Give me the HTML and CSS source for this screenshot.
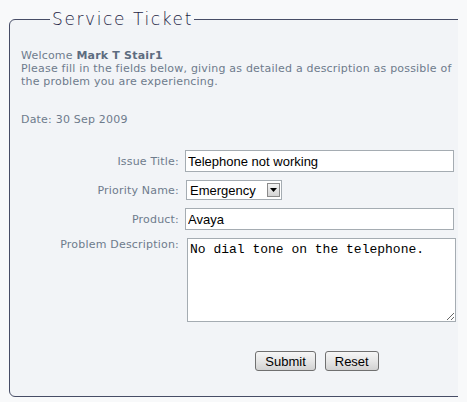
FILE: index.html
```html
<!DOCTYPE html>
<html>
  <head>
    <title>Service Ticket</title>
    <link rel="stylesheet" href="styles.css">
  </head>
  <body>
    <form class="ticket-form">
      <fieldset class="ticket-box">
        <legend class="ticket-legend">Service Ticket</legend>

        <div class="intro">
          <p>Welcome <b class="user-name">Mark T Stair1</b><br>
          Please fill in the fields below, giving as detailed a description as possible of the problem you are experiencing.</p>
          <p class="date-line">Date: 30 Sep 2009</p>
        </div>

        <div class="field-grid">
          <label class="field-label" for="issue-title">Issue Title:</label>
          <input id="issue-title" class="text-input" value="Telephone not working">

          <label class="field-label" for="priority">Priority Name:</label>
          <span class="select-wrap">
            <select id="priority" class="select-input">
              <option>Emergency</option>
              <option>High</option>
              <option>Normal</option>
              <option>Low</option>
            </select>
            <span class="select-arrow">
              <svg width="7" height="4" viewBox="0 0 7 4"><path d="M0 0H7L3.5 4Z" fill="#000"/></svg>
            </span>
          </span>

          <label class="field-label" for="product">Product:</label>
          <input id="product" class="text-input" value="Avaya">

          <label class="field-label label-top" for="description">Problem Description:</label>
          <textarea id="description" class="text-area">No dial tone on the telephone.</textarea>

          <span></span>
          <div class="button-row">
            <button type="submit" class="form-button">Submit</button>
            <button type="reset" class="form-button">Reset</button>
          </div>
        </div>
      </fieldset>
    </form>
  </body>
</html>
```

FILE: styles.css
```css
body {
  margin: 9px;
  background-color: #f8f9fa;
  font-family: "DejaVu Sans", Verdana, sans-serif;
  font-size: 11px;
  letter-spacing: 0.2px;
  color: #6e7b8c;
}
.ticket-box {
  margin: 0;
  padding: 0 11px 25px 11px;
  border: 1px solid #474d66;
  border-radius: 6px;
  background-color: #f2f4f7;
}
.ticket-legend {
  margin-left: 29px;
  padding: 0 1px 0 2px;
  line-height: 20px;
  font-family: "DejaVu Sans ExtraLight", "DejaVu Sans", sans-serif;
  font-weight: 200;
  font-size: 17px;
  letter-spacing: 1.6px;
  color: #1f2545;
}
.intro p {
  margin: 0;
  line-height: 13px;
}
.intro {
  padding-top: 20px;
}
.user-name {
  color: #5d6c80;
}
.date-line {
  padding-top: 25px;
}
.field-grid {
  display: grid;
  grid-template-columns: 158px 270px;
  column-gap: 6px;
  row-gap: 8px;
  margin-top: 24px;
}
.field-label {
  text-align: right;
  align-self: center;
}
.label-top {
  align-self: start;
}
.text-input {
  box-sizing: border-box;
  width: 269px;
  height: 22px;
  margin: 0;
  padding: 0 2px;
  border: 1px solid #a5acb2;
  background-color: white;
  font-family: "Liberation Sans", Arial, sans-serif;
  font-size: 13px;
  letter-spacing: 0;
  color: black;
}
.select-wrap {
  position: relative;
  display: inline-block;
  width: 96px;
  height: 20px;
  margin-left: 1px;
}
.select-input {
  box-sizing: border-box;
  width: 96px;
  height: 20px;
  margin: 0;
  padding: 0 0 0 3px;
  border: 1px solid #a5acb2;
  border-radius: 0;
  background-color: white;
  appearance: none;
  font-family: "Liberation Sans", Arial, sans-serif;
  font-size: 13px;
  letter-spacing: 0;
  color: black;
}
.select-arrow {
  position: absolute;
  top: 3px;
  right: 2px;
  box-sizing: border-box;
  width: 13px;
  height: 14px;
  display: flex;
  align-items: center;
  justify-content: center;
  border: 1px solid #8a8a8a;
  background: linear-gradient(#f4f4f4, #d4d4d4);
  pointer-events: none;
}
.text-area {
  box-sizing: border-box;
  width: 269px;
  height: 84px;
  margin: 0 0 0 2px;
  padding: 3px 2px;
  border: 1px solid #a5acb2;
  background-color: white;
  font-family: "Liberation Mono", "Courier New", monospace;
  font-size: 13px;
  letter-spacing: 0;
  color: black;
  resize: both;
}
.button-row {
  display: flex;
  justify-content: center;
  gap: 9px;
  margin-top: 21px;
  padding-right: 6px;
}
.form-button {
  height: 20px;
  padding: 0 9px;
  border: 1px solid #707070;
  border-radius: 3px;
  background: linear-gradient(#f6f6f6 0%, #e6e6e6 50%, #d2d2d2 100%);
  font-family: "Liberation Sans", Arial, sans-serif;
  font-size: 13px;
  letter-spacing: 0;
  color: black;
  cursor: pointer;
}
```
